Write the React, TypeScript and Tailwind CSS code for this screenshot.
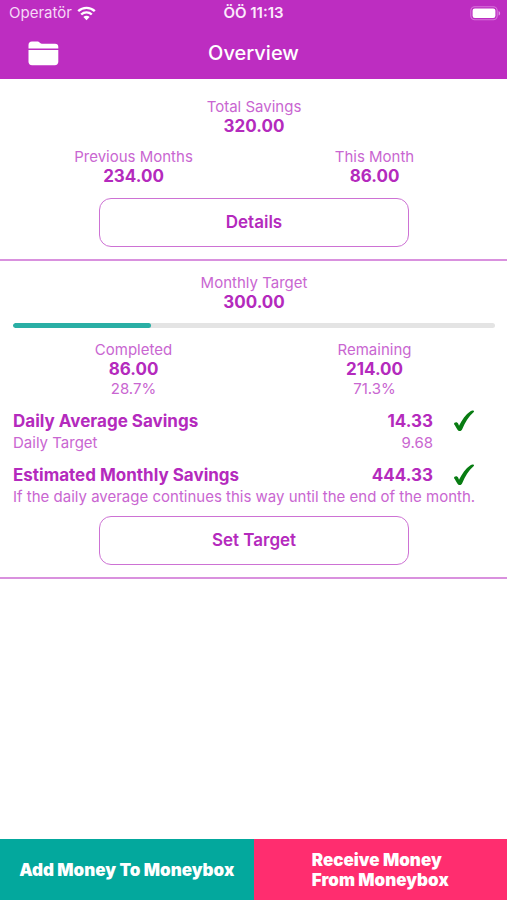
import React from 'react';

type StatProps = {
  label: string;
  value: string;
  note?: string;
};

const Stat: React.FC<StatProps> = ({ label, value, note }) => (
  <div className="flex flex-1 flex-col items-center">
    <span className="text-[15px] leading-[19px] text-[#c966d1]">{label}</span>
    <span className="text-[17px] leading-5 font-bold">{value}</span>
    {note && <span className="text-[15px] leading-5 text-[#c966d1]">{note}</span>}
  </div>
);

const OutlineButton: React.FC<{ children: React.ReactNode }> = ({ children }) => (
  <button
    type="button"
    className="mx-auto block h-[49px] w-[310px] max-w-full rounded-[12px] border border-[#cd72d4] text-[17px] font-semibold"
  >
    {children}
  </button>
);

const WifiIcon = () => (
  <svg width="19" height="15" viewBox="0 0 19 15" fill="none" stroke="#fff" strokeWidth="2.4" aria-hidden="true">
    <path d="M1.2 5.2a12 12 0 0 1 16.6 0" />
    <path d="M4.2 8.500a7.600 7.600 0 0 1 10.600 0" />
    <path d="M9.500 14.200 6.400 11.100a4.400 4.400 0 0 1 6.200 0z" fill="#fff" stroke="none" />
  </svg>
);

const BatteryIcon = () => (
  <svg width="31" height="15" viewBox="0 0 31 15" aria-hidden="true">
    <rect x="0.8" y="0.8" width="26.4" height="13" rx="4" fill="none" stroke="#d873dc" strokeWidth="1.1" />
    <rect x="2.6" y="2.6" width="22.8" height="9.4" rx="2.2" fill="#fff" />
    <path d="M28.600 5c2 .8 2 3.800 0 4.600z" fill="#df93e4" />
  </svg>
);

const FolderIcon = () => (
  <svg width="31" height="25" viewBox="0 0 31 25" fill="#fff" aria-hidden="true">
    <path d="M.5 7.400V4Q.5.5 4 .5h4.800c1.600 0 2.200.5 3.100 1.300.8.7 1.400 1 2.700 1H27q3.300 0 3.300 3.300v1.300z" />
    <path d="M.5 9h29.800v11.600q0 3.600-3.600 3.600H4.100Q.5 24.200.5 20.600z" />
  </svg>
);

const CheckIcon = () => (
  <svg width="22" height="22" viewBox="0 0 22 22" role="img" aria-label="On track">
    <path
      d="M1 14.200c-.2-1.300 1.600-2.400 3-1.800 1.100.5 1.500 2 2 3.300C9 10 12.500 4.500 17.500 1.200c1.200-.8 2.700-.7 3.400-.3.3.3.1.9-.4 1.400C15.500 6.500 12.200 12.500 9.200 19.300c-.6 1.500-2 2.200-3.300 1.600C4 20 2.500 15.500 1 14.200z"
      fill="#087c12"
    />
  </svg>
);

const TargetRow: React.FC<{ label: string; value: string }> = ({ label, value }) => (
  <div className="flex items-center text-[17px] leading-[22px] font-bold">
    <span className="flex-1">{label}</span>
    <span>{value}</span>
    <span className="mx-5">
      <CheckIcon />
    </span>
  </div>
);

export default function App() {
  return (
    <div className="flex min-h-screen flex-col bg-white font-['Inter',sans-serif] text-[#b42abd]">
      <header className="bg-[#bd2dc1] text-white">
        <div className="grid h-[27px] grid-cols-3 items-center text-[15px]">
          <div className="flex items-center gap-[5px] pl-[9px] text-[#f5d9f6]">
            <span>Operatör</span>
            <WifiIcon />
          </div>
          <span className="text-center font-semibold text-[#fbeafb]">ÖÖ 11:13</span>
          <div className="flex justify-end pr-[6px]">
            <BatteryIcon />
          </div>
        </div>
        <div className="grid h-[52px] grid-cols-3 items-center">
          <button type="button" aria-label="Folders" className="ml-7 justify-self-start">
            <FolderIcon />
          </button>
          <h1 className="text-center text-[20px] font-medium">Overview</h1>
        </div>
      </header>

      <main className="flex-1">
        <section className="border-b-2 border-[#d991de] pt-[18px] pr-3 pb-3 pl-[13px]">
          <Stat label="Total Savings" value="320.00" />
          <div className="mt-[11px] mb-3 flex">
            <Stat label="Previous Months" value="234.00" />
            <Stat label="This Month" value="86.00" />
          </div>
          <OutlineButton>Details</OutlineButton>
        </section>

        <section className="border-b-2 border-[#d991de] pt-3 pr-3 pb-3 pl-[13px]">
          <Stat label="Monthly Target" value="300.00" />
          <div className="mt-[11px] mb-3 h-[5px] overflow-hidden rounded-full bg-[#e4e4e4]">
            <div className="h-full rounded-full bg-[#2aafa5]" style={{ width: '28.7%' }} />
          </div>
          <div className="mb-[11px] flex">
            <Stat label="Completed" value="86.00" note="28.7%" />
            <Stat label="Remaining" value="214.00" note="71.3%" />
          </div>
          <TargetRow label="Daily Average Savings" value="14.33" />
          <div className="mb-[10px] flex justify-between pr-[62px] text-[15px] leading-[22px] text-[#c966d1]">
            <span>Daily Target</span>
            <span>9.68</span>
          </div>
          <TargetRow label="Estimated Monthly Savings" value="444.33" />
          <p className="mb-2 text-[15px] leading-[22px] text-[#c966d1]">
            If the daily average continues this way until the end of the month.
          </p>
          <OutlineButton>Set Target</OutlineButton>
        </section>
      </main>

      <footer className="flex h-[61px] text-[17px] leading-5 font-black text-white">
        <button type="button" className="flex-1 bg-[#03a89d]">
          Add Money To Moneybox
        </button>
        <button type="button" className="flex flex-1 items-center justify-center bg-[#ff2d6f] text-left">
          <span>
            Receive Money
            <br />
            From Moneybox
          </span>
        </button>
      </footer>
    </div>
  );
}
